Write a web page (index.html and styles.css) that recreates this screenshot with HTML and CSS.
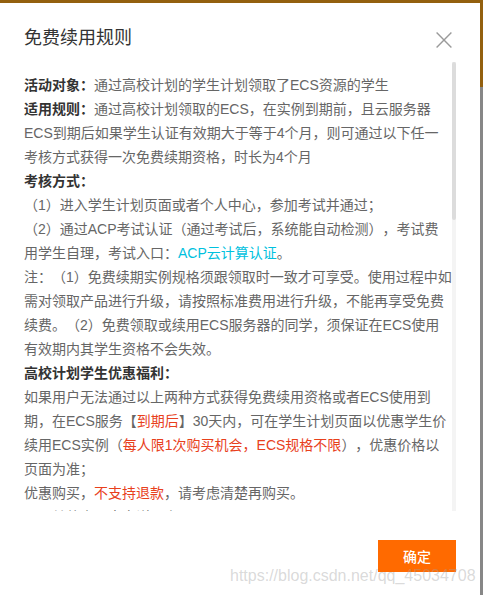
FILE: index.html
```html
<!DOCTYPE html>
<html lang="zh-CN">
<head>
<meta charset="utf-8">
<title>免费续用规则</title>
<link rel="stylesheet" href="styles.css">
</head>
<body>
<div class="modal">
  <div class="modal-header">
    <h2 class="modal-title">免费续用规则</h2>
    <button class="modal-close" type="button" aria-label="关闭">
      <svg width="16" height="16" viewBox="0 0 16 16"><path d="M0.6 0.6 L15.4 15.4 M15.4 0.6 L0.6 15.4" stroke="#9a9a9a" stroke-width="1.4" fill="none"/></svg>
    </button>
  </div>
  <div class="modal-body">
    <div class="modal-content">
      <p><b class="label">活动对象：</b>通过高校计划的学生计划领取了ECS资源的学生</p>
      <p><b class="label">适用规则：</b>通过高校计划领取的ECS，在实例到期前，且云服务器<br>ECS到期后如果学生认证有效期大于等于4个月，则可通过以下任一<br>考核方式获得一次免费续期资格，时长为4个月</p>
      <p><b class="label">考核方式：</b></p>
      <p>（1）进入学生计划页面或者个人中心，参加考试并通过；</p>
      <p>（2）通过ACP考试认证（通过考试后，系统能自动检测），考试费<br>用学生自理，考试入口：<a class="link" href="#">ACP云计算认证</a>。</p>
      <p>注：（1）免费续期实例规格须跟领取时一致才可享受。使用过程中如<br>需对领取产品进行升级，请按照标准费用进行升级，不能再享受免费<br>续费。（2）免费领取或续用ECS服务器的同学，须保证在ECS使用<br>有效期内其学生资格不会失效。</p>
      <p><b class="label">高校计划学生优惠福利：</b></p>
      <p>如果用户无法通过以上两种方式获得免费续用资格或者ECS使用到<br>期，在ECS服务【<span class="red">到期后</span>】30天内，可在学生计划页面以优惠学生价<br>续用ECS实例（<span class="red">每人限1次购买机会，ECS规格不限</span>），优惠价格以<br>页面为准；</p>
      <p>优惠购买，<span class="red">不支持退款</span>，请考虑清楚再购买。</p>
      <p>　　其他未尽事宜详见官网</p>
    </div>
    <div class="scrollbar"><div class="scrollbar-thumb"></div></div>
  </div>
  <div class="modal-footer">
    <button class="btn-primary" type="button">确定</button>
  </div>
  <div class="watermark">https://blog.csdn.net/qq_45034708</div>
</div>
</body>
</html>
```
FILE: styles.css
```css
html, body {
  margin: 0;
  padding: 0;
}
body {
  background: linear-gradient(#93600f 0, #93600f 87px, #878787 87px);
  font-family: "Liberation Sans", "Noto Sans CJK SC", sans-serif;
  height: 595px;
  overflow: hidden;
}
.modal {
  position: relative;
  margin-top: 3px;
  width: 480px;
  height: 592px;
  background: #fff;
  display: flex;
  flex-direction: column;
}
.modal-header {
  display: flex;
  justify-content: space-between;
  align-items: flex-start;
  padding: 23px 28px 12px 24px;
}
.modal-title {
  margin: 0;
  font-size: 18px;
  font-weight: normal;
  line-height: 24px;
  color: #333;
}
.modal-close {
  width: 16px;
  height: 16px;
  margin-top: 6px;
  padding: 0;
  border: 0;
  background: none;
  display: block;
}
.modal-close svg {
  display: block;
}
.modal-body {
  display: flex;
  margin-left: 24px;
  width: 432px;
  height: 449px;
  flex: none;
}
.modal-content {
  box-sizing: border-box;
  width: 428px;
  height: 449px;
  overflow: hidden;
  padding-top: 11px;
  font-size: 14px;
  line-height: 24px;
  color: #666;
  text-spacing-trim: space-all;
}
.modal-content p {
  margin: 0;
}
.scrollbar {
  width: 4px;
  height: 449px;
  background: #f4f4f4;
}
.scrollbar-thumb {
  height: 158px;
  background: #dcdcdc;
  border-radius: 2px;
}
.label {
  font-weight: bold;
  color: #333;
}
.link {
  color: #00c1de;
  text-decoration: none;
}
.red {
  color: #e8401c;
}
.modal-footer {
  display: flex;
  justify-content: flex-end;
  padding: 29px 24px 0 0;
}
.btn-primary {
  width: 78px;
  height: 32px;
  border: 0;
  padding: 0;
  background: #ff6a00;
  color: #fff;
  font-family: inherit;
  font-size: 14px;
  font-weight: 500;
}
.watermark {
  position: absolute;
  left: 230px;
  top: 564px;
  font-family: "Liberation Sans", sans-serif;
  font-size: 16px;
  line-height: 18px;
  color: rgba(160, 160, 160, 0.4);
  white-space: nowrap;
  pointer-events: none;
}
```
